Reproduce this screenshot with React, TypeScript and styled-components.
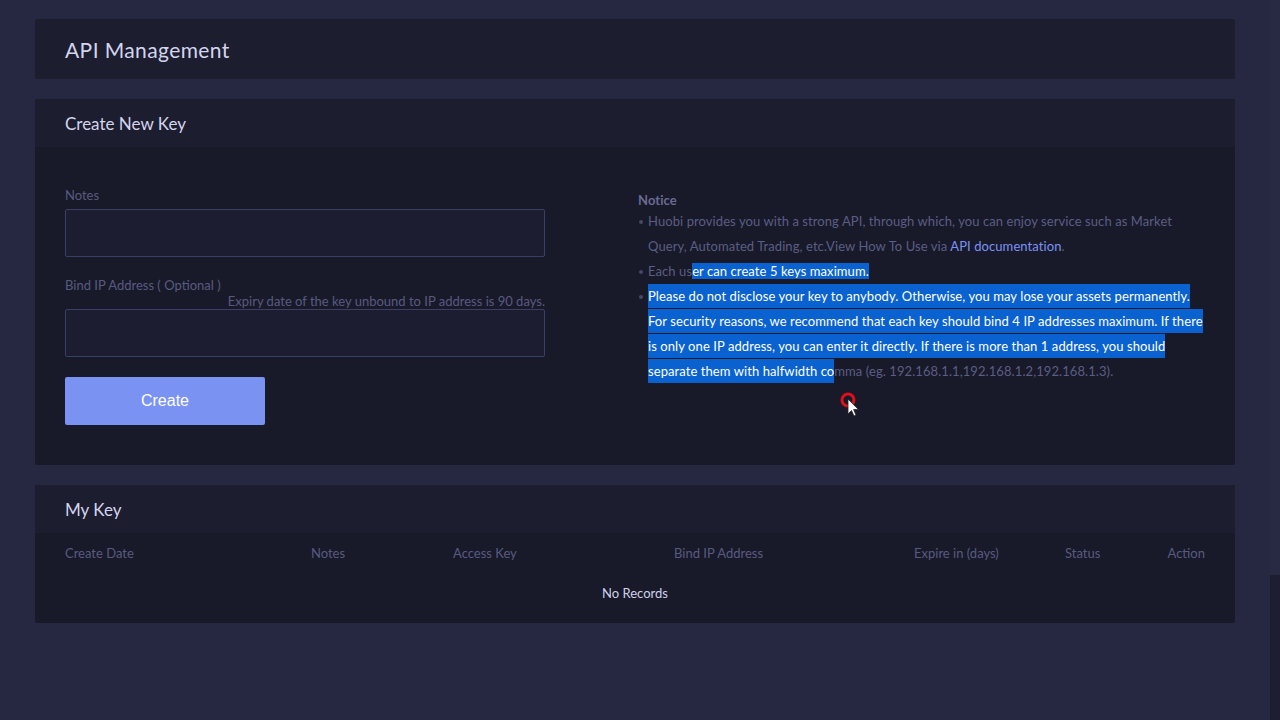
import React from "react";
import styled, { createGlobalStyle } from "styled-components";

const Global = createGlobalStyle`
  html, body { margin: 0; padding: 0; background: #262841; }
  body { font-family: Lato, "Noto Sans", sans-serif; -webkit-font-smoothing: antialiased; }
  * { box-sizing: border-box; }
`;

const Shell = styled.div`
  display: flex;
  width: 1280px;
  height: 720px;
  overflow: hidden;
  position: relative;
  background: #262841;
`;

const Main = styled.main`
  flex: 1;
  padding: 19px 35px 0 35px;
  display: flex;
  flex-direction: column;
  gap: 20px;
`;

const ScrollTrack = styled.div`
  width: 10px;
  display: flex;
  flex-direction: column;
`;

const ScrollPart = styled.div<{ $h: number; $c: string }>`
  height: ${(p) => p.$h}px;
  flex: ${(p) => (p.$h ? "none" : 1)};
  background: ${(p) => p.$c};
`;

const Card = styled.section`
  width: 1200px;
  background: #181929;
  border-radius: 2px;
  overflow: hidden;
`;

const CardHeader = styled.div<{ $h: number }>`
  height: ${(p) => p.$h}px;
  display: flex;
  align-items: center;
  padding: 0 30px;
  background: #1c1d2e;
`;

const PageTitle = styled.h1`
  margin: 0;
  font-size: 21px;
  letter-spacing: 0.4px;
  font-weight: 400;
  color: #d3d5ee;
`;

const SectionTitle = styled.h2`
  margin: 0;
  font-size: 17px;
  font-weight: 400;
  color: #d3d5ee;
`;

const FormBody = styled.div`
  display: grid;
  grid-template-columns: 480px 567px;
  column-gap: 93px;
  padding: 38px 30px 40px 30px;
`;

const FormCol = styled.div`
  display: flex;
  flex-direction: column;
`;

const Label = styled.label<{ $mt?: number }>`
  display: block;
  font-size: 13px;
  line-height: 20px;
  color: #585b80;
  margin-top: ${(p) => p.$mt ?? 0}px;
`;

const Hint = styled.div`
  font-size: 13px;
  line-height: 16px;
  color: #585b80;
  text-align: right;
  margin-top: -2px;
`;

const Input = styled.input<{ $mt?: number }>`
  width: 480px;
  height: 48px;
  margin-top: ${(p) => p.$mt ?? 0}px;
  background: #1c1d31;
  border: 1px solid #3b3e66;
  border-radius: 2px;
  outline: none;
  color: #d3d5ee;
  padding: 0 12px;
  font: inherit;
`;

const CreateButton = styled.button`
  margin-top: 20px;
  width: 200px;
  height: 48px;
  border: none;
  border-radius: 2px;
  background: #7a93f3;
  color: #ffffff;
  font-family: "Liberation Sans", Arial, sans-serif;
  font-size: 16px;
  cursor: pointer;
`;

const NoticeCol = styled.div`
  padding-top: 6px;
  font-size: 13px;
  letter-spacing: 0.08px;
  line-height: 25px;
  color: #5b5e84;
`;

const NoticeTitle = styled.div`
  font-weight: 700;
  line-height: 18px;
  color: #686b93;
`;

const NoticeList = styled.ul`
  list-style: none;
  margin: 0;
  padding: 0;
`;

const NoticeItem = styled.li`
  position: relative;
  padding-left: 10px;
  white-space: nowrap;
  &::before {
    content: "";
    position: absolute;
    left: 1px;
    top: 11px;
    width: 4px;
    height: 4px;
    border-radius: 50%;
    background: #46496c;
  }
`;

const Link = styled.a`
  color: #7a93f5;
  text-decoration: none;
`;

const Selected = styled.span<{ $pad?: number }>`
  background: #0a62d0;
  color: #ffffff;
  padding: ${(p) => p.$pad ?? 0}px 0;
`;

const TableWrap = styled.div`
  padding: 0 30px 10px 30px;
`;

const TableRow = styled.div`
  display: grid;
  grid-template-columns: 246px 142px 221px 240px 151px 1fr auto;
  height: 40px;
  align-items: center;
`;

const Th = styled.div`
  font-size: 13px;
  color: #585b80;
`;

const Empty = styled.div`
  height: 40px;
  display: flex;
  align-items: center;
  justify-content: center;
  font-size: 13px;
  color: #cfd1ea;
`;

const Cursor = styled.svg`
  position: absolute;
  left: 838px;
  top: 390px;
  pointer-events: none;
`;

export default function App() {
  return (
    <>
      <Global />
      <Shell>
        <Main>
          <Card>
            <CardHeader $h={60}>
              <PageTitle>API Management</PageTitle>
            </CardHeader>
          </Card>

          <Card>
            <CardHeader $h={48}>
              <SectionTitle>Create New Key</SectionTitle>
            </CardHeader>
            <FormBody>
              <FormCol>
                <Label>Notes</Label>
                <Input $mt={4} />
                <Label $mt={18}>Bind IP Address ( Optional )</Label>
                <Hint>Expiry date of the key unbound to IP address is 90 days.</Hint>
                <Input />
                <div>
                  <CreateButton>Create</CreateButton>
                </div>
              </FormCol>
              <NoticeCol>
                <NoticeTitle>Notice</NoticeTitle>
                <NoticeList>
                  <NoticeItem>
                    Huobi provides you with a strong API, through which, you can enjoy service such as Market
                    <br />
                    Query, Automated Trading, etc.View How To Use via <Link href="#">API documentation</Link>.
                  </NoticeItem>
                  <NoticeItem>
                    Each us<Selected>er can create 5 keys maximum. </Selected>
                  </NoticeItem>
                  <NoticeItem>
                    <Selected $pad={4}>
                      Please do not disclose your key to anybody. Otherwise, you may lose your assets permanently.{" "}
                      <br />
                      For security reasons, we recommend that each key should bind 4 IP addresses maximum. If there
                      <br />
                      is only one IP address, you can enter it directly. If there is more than 1 address, you should
                      <br />
                      separate them with halfwidth co
                    </Selected>
                    mma (eg. 192.168.1.1,192.168.1.2,192.168.1.3).
                  </NoticeItem>
                </NoticeList>
              </NoticeCol>
            </FormBody>
          </Card>

          <Card>
            <CardHeader $h={48}>
              <SectionTitle>My Key</SectionTitle>
            </CardHeader>
            <TableWrap>
              <TableRow>
                <Th>Create Date</Th>
                <Th>Notes</Th>
                <Th>Access Key</Th>
                <Th>Bind IP Address</Th>
                <Th>Expire in (days)</Th>
                <Th>Status</Th>
                <Th>Action</Th>
              </TableRow>
              <Empty>No Records</Empty>
            </TableWrap>
          </Card>
        </Main>
        <ScrollTrack>
          <ScrollPart $h={575} $c="#282a44" />
          <ScrollPart $h={0} $c="#1d1e31" />
        </ScrollTrack>
        <Cursor width="24" height="26" viewBox="0 0 24 26">
          <circle cx="10" cy="10" r="6" fill="none" stroke="#e0101a" strokeWidth="3" />
          <path d="M10 9 L10 24 L13.5 20.5 L16 26 L18 25 L15.6 19.6 L20.5 19.6 Z" fill="#ffffff" stroke="#222" strokeWidth="0.8" />
        </Cursor>
      </Shell>
    </>
  );
}
